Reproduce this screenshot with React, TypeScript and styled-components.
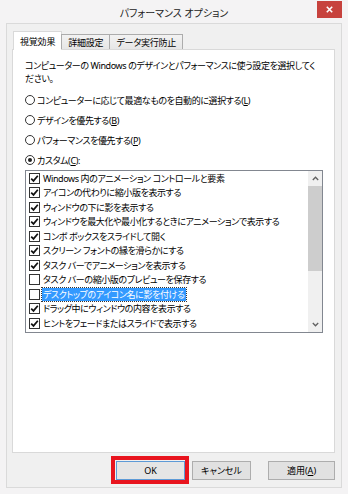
import React from 'react';
import styled, { createGlobalStyle } from 'styled-components';

const GlobalStyle = createGlobalStyle`
  html, body { margin: 0; padding: 0; background: #f4f3f4; }
  * { box-sizing: border-box; }
`;

const Window = styled.div`
  width: 348px;
  height: 494px;
  display: flex;
  flex-direction: column;
  padding: 0 6px 6px 6px;
  background: #f4f3f4;
  font-family: "Noto Sans", "Noto Sans CJK JP", sans-serif;
  font-size: 9px;
  font-feature-settings: "palt";
  color: #000;
`;

const TitleBar = styled.div`
  height: 23px;
  display: grid;
  grid-template-columns: 1fr auto 1fr;
  align-items: start;
`;

const Title = styled.div`
  grid-column: 2;
  padding-top: 5px;
  line-height: 17px;
  font-size: 10px;
  color: #222;
  white-space: nowrap;
`;

const CloseButton = styled.div`
  grid-column: 3;
  justify-self: end;
  width: 25px;
  height: 17px;
  margin-top: 1px;
  background: #c7423d;
  display: flex;
  align-items: center;
  justify-content: center;
`;

const Client = styled.div`
  flex: 1;
  display: flex;
  flex-direction: column;
  background: #f0f0f0;
  border: 1px solid #dadada;
  padding: 7px 6px 7px 5px;
`;

const TabStrip = styled.div`
  height: 18px;
  display: flex;
  align-items: flex-end;
  padding-left: 1px;
  position: relative;
  z-index: 1;
  letter-spacing: -0.2px;
`;

const Tab = styled.div<{ $active?: boolean }>`
  height: ${p => (p.$active ? 19 : 15)}px;
  margin-bottom: ${p => (p.$active ? -1 : 0)}px;
  padding: 0 6px;
  display: flex;
  align-items: center;
  justify-content: center;
  white-space: nowrap;
  background: ${p => (p.$active ? '#ffffff' : 'linear-gradient(#f2f2f2, #e6e6e6)')};
  border: 1px solid ${p => (p.$active ? '#d9d9d9' : '#acacac')};
  border-bottom: none;
  margin-left: ${p => (p.$active ? 0 : -1)}px;
  &:first-child { margin-left: 0; }
`;

const Panel = styled.div`
  flex: 1;
  background: #ffffff;
  border: 1px solid #d9d9d9;
  padding: 9px 11px 0 12px;
  display: flex;
  flex-direction: column;
  letter-spacing: -0.4px;
`;

const Description = styled.p`
  margin: 0;
  line-height: 13px;
  white-space: nowrap;
`;

const Line = styled.span`
  display: block;
`;

const RadioGroup = styled.div`
  margin-top: 5px;
  display: flex;
  flex-direction: column;
`;

const RadioRow = styled.div`
  height: 20px;
  display: flex;
  align-items: center;
  white-space: nowrap;
`;

const RadioCircle = styled.span<{ $checked?: boolean }>`
  width: 10px;
  height: 10px;
  border-radius: 50%;
  border: 1px solid #333;
  margin-right: 2px;
  display: flex;
  align-items: center;
  justify-content: center;
  flex: none;
  &::after {
    content: '';
    display: ${p => (p.$checked ? 'block' : 'none')};
    width: 4px;
    height: 4px;
    border-radius: 50%;
    background: #222;
  }
`;

const Key = styled.u`
  text-underline-offset: 1px;
`;

const ListBox = styled.div`
  height: 163px;
  border: 1px solid #828790;
  display: flex;
`;

const Items = styled.div`
  flex: 1;
  display: flex;
  flex-direction: column;
`;

const Item = styled.div`
  height: 14.5px;
  display: flex;
  align-items: center;
  padding-left: 3px;
  white-space: nowrap;
`;

const CheckBox = styled.span`
  width: 11px;
  height: 11px;
  border: 1px solid #333;
  margin-right: 3px;
  display: flex;
  align-items: center;
  justify-content: center;
  flex: none;
  background: #fff;
`;

const ItemText = styled.span<{ $selected?: boolean }>`
  line-height: 13px;
  padding: 0 1px;
  margin-left: -1px;
  background: ${p => (p.$selected ? '#3399ff' : 'transparent')};
  color: ${p => (p.$selected ? '#fff' : '#000')};
  outline: ${p => (p.$selected ? '1px dotted #333' : 'none')};
`;

const ScrollBar = styled.div`
  width: 14px;
  background: #f0f0f0;
  display: flex;
  flex-direction: column;
`;

const ScrollArrow = styled.div`
  height: 15px;
  display: flex;
  align-items: center;
  justify-content: center;
`;

const ScrollTrack = styled.div`
  flex: 1;
  display: flex;
  flex-direction: column;
`;

const Thumb = styled.div`
  height: 85px;
  background: #cdcdcd;
`;

const ButtonRow = styled.div`
  margin-top: 8px;
  display: flex;
  justify-content: flex-end;
`;

const Button = styled.div<{ $w: number; $gap: number; $default?: boolean }>`
  position: relative;
  width: ${p => p.$w}px;
  height: 19px;
  margin-left: ${p => p.$gap}px;
  display: flex;
  align-items: center;
  justify-content: center;
  background: ${p => (p.$default ? '#e5e5e5' : '#e1e1e1')};
  border: 1px solid ${p => (p.$default ? '#5d9ad6' : '#adadad')};
  white-space: nowrap;
`;

const Highlight = styled.span`
  position: absolute;
  top: -6px;
  left: -6px;
  right: -5px;
  bottom: -5px;
  border: 4px solid #e8141e;
  pointer-events: none;
`;

const Check = () => (
  <svg width="9" height="9" viewBox="0 0 9 9">
    <path d="M1.2 4.6 L3.5 6.9 L7.8 1.8" fill="none" stroke="#111" strokeWidth="1.7" />
  </svg>
);

const items: { text: React.ReactNode; checked: boolean; selected?: boolean }[] = [
  { text: 'Windows 内のアニメーション コントロールと要素', checked: true },
  { text: 'アイコンの代わりに縮小版を表示する', checked: true },
  { text: 'ウィンドウの下に影を表示する', checked: true },
  { text: 'ウィンドウを最大化や最小化するときにアニメーションで表示する', checked: true },
  { text: 'コンボ ボックスをスライドして開く', checked: true },
  { text: 'スクリーン フォントの縁を滑らかにする', checked: true },
  { text: 'タスク バーでアニメーションを表示する', checked: true },
  { text: 'タスク バーの縮小版のプレビューを保存する', checked: false },
  { text: 'デスクトップのアイコン名に影を付ける', checked: false, selected: true },
  { text: 'ドラッグ中にウィンドウの内容を表示する', checked: true },
  { text: 'ヒントをフェードまたはスライドで表示する', checked: true },
];

export default function App() {
  return (
    <>
      <GlobalStyle />
      <Window>
        <TitleBar>
          <Title>パフォーマンス オプション</Title>
          <CloseButton>
            <svg width="7" height="7" viewBox="0 0 7 7">
              <path d="M0.8 0.8 L6.2 6.2 M6.2 0.8 L0.8 6.2" stroke="#fff" strokeWidth="1.6" />
            </svg>
          </CloseButton>
        </TitleBar>
        <Client>
          <TabStrip>
            <Tab $active>視覚効果</Tab>
            <Tab>詳細設定</Tab>
            <Tab>データ実行防止</Tab>
          </TabStrip>
          <Panel>
            <Description>
              <Line>コンピューターの Windows のデザインとパフォーマンスに使う設定を選択してく</Line>
              <Line>ださい。</Line>
            </Description>
            <RadioGroup>
              <RadioRow>
                <RadioCircle />
                コンピューターに応じて最適なものを自動的に選択する(<Key>L</Key>)
              </RadioRow>
              <RadioRow>
                <RadioCircle />
                デザインを優先する(<Key>B</Key>)
              </RadioRow>
              <RadioRow>
                <RadioCircle />
                パフォーマンスを優先する(<Key>P</Key>)
              </RadioRow>
              <RadioRow>
                <RadioCircle $checked />
                カスタム(<Key>C</Key>):
              </RadioRow>
            </RadioGroup>
            <ListBox>
              <Items>
                {items.map((it, i) => (
                  <Item key={i}>
                    <CheckBox>{it.checked && <Check />}</CheckBox>
                    <ItemText $selected={it.selected}>{it.text}</ItemText>
                  </Item>
                ))}
              </Items>
              <ScrollBar>
                <ScrollArrow>
                  <svg width="7" height="5" viewBox="0 0 7 5">
                    <path d="M0.8 4 L3.5 1.2 L6.2 4" fill="none" stroke="#606060" strokeWidth="1.3" />
                  </svg>
                </ScrollArrow>
                <ScrollTrack>
                  <Thumb />
                </ScrollTrack>
                <ScrollArrow>
                  <svg width="7" height="5" viewBox="0 0 7 5">
                    <path d="M0.8 1 L3.5 3.8 L6.2 1" fill="none" stroke="#606060" strokeWidth="1.3" />
                  </svg>
                </ScrollArrow>
              </ScrollBar>
            </ListBox>
          </Panel>
          <ButtonRow>
            <Button $w={69} $gap={0} $default>
              OK
              <Highlight />
            </Button>
            <Button $w={59} $gap={7}>キャンセル</Button>
            <Button $w={67} $gap={17}>
              適用(<Key>A</Key>)
            </Button>
          </ButtonRow>
        </Client>
      </Window>
    </>
  );
}
